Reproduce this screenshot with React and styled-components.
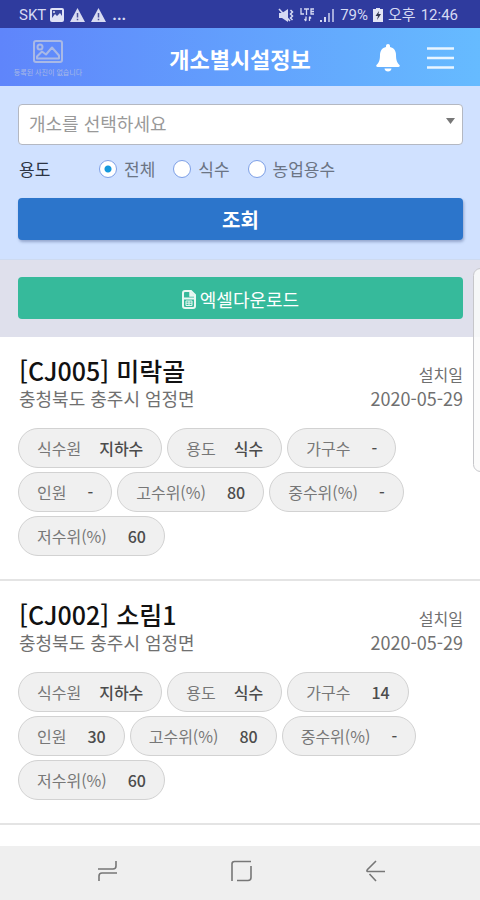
import React, { useState } from "react";
import styled, { createGlobalStyle } from "styled-components";

const GlobalStyle = createGlobalStyle`
  * {
    box-sizing: border-box;
  }
  body {
    margin: 0;
    background-color: #ffffff;
    color: #111111;
    font-family: "Noto Sans CJK KR", "Noto Sans", sans-serif;
  }
  button, select, input {
    font-family: inherit;
  }
`;

const Page = styled.div`
  display: flex;
  flex-direction: column;
  min-height: 100vh;
`;

const StatusBar = styled.div`
  display: flex;
  align-items: center;
  justify-content: space-between;
  height: 28px;
  padding: 2px 22px 0 19px;
  color: #d6daf3;
  background-color: #2f3b9e;
  font-family: Roboto, "Noto Sans CJK KR", sans-serif;
  font-size: 15px;
  line-height: 24px;
`;
const StatusGroup = styled.div`
  display: flex;
  align-items: center;
  gap: ${(props) => props.$gap};
`;
const More = styled.span`
  font-size: 16px;
  font-weight: 700;
`;

const Header = styled.header`
  display: grid;
  grid-template-columns: 1fr auto 1fr;
  align-items: center;
  height: 58px;
  padding: 2px 12px 0;
  background: linear-gradient(90deg, #5f85fb, #66bbff);
`;
const Logo = styled.div`
  display: flex;
  flex-direction: column;
  align-items: center;
  gap: 4px;
  width: 72px;
  color: #a9b9e6;
  font-size: 7px;
  line-height: 10px;
  white-space: nowrap;
`;
const HeaderTitle = styled.h1`
  margin: 0;
  color: #ffffff;
  font-size: 22px;
  font-weight: 700;
  line-height: 32px;
`;
const HeaderActions = styled.div`
  display: flex;
  align-items: center;
  justify-content: flex-end;
  gap: 27px;
  padding-right: 14px;
`;
const IconButton = styled.button`
  display: flex;
  padding: 0;
  border: none;
  background: none;
`;

const SearchForm = styled.form`
  display: flex;
  flex-direction: column;
  padding: 18px 17px 19px 18px;
  background-color: #d0e1ff;
`;
const SelectBox = styled.div`
  position: relative;
`;
const Select = styled.select`
  display: block;
  width: 100%;
  height: 41px;
  padding: 0 10px 4px;
  border: 1px solid #b4b8c2;
  border-radius: 4px;
  appearance: none;
  color: #999999;
  background-color: #ffffff;
  font-size: 18px;
  font-weight: 400;
`;
const SelectArrow = styled.svg`
  position: absolute;
  top: 14px;
  right: 8px;
  pointer-events: none;
`;

const UsageRow = styled.fieldset`
  display: flex;
  align-items: center;
  margin: 0;
  padding: 10px 0 15px 1px;
  border: none;
  font-size: 17px;
  line-height: 28px;
`;
const UsageTitle = styled.span`
  width: 80px;
  color: #2c3444;
`;
const RadioGroup = styled.div`
  display: flex;
  gap: 18px;
`;
const RadioLabel = styled.label`
  display: flex;
  align-items: center;
  gap: 7px;
  color: #6b7484;
`;
const Radio = styled.input`
  width: 18px;
  height: 18px;
  margin: 0;
  border: 1px solid #7d9fe6;
  border-radius: 50%;
  appearance: none;
  background-color: #ffffff;

  &:checked {
    background-image: radial-gradient(circle, #1599dd 3px, #ffffff 4px);
  }
`;

const WideButton = styled.button`
  display: flex;
  align-items: center;
  justify-content: center;
  gap: 4px;
  width: 100%;
  height: 42px;
  padding: 2px 0 0;
  border: none;
  border-radius: 4px;
  color: #ffffff;
  background-color: ${(props) => props.$bgcol};
  box-shadow: ${(props) => props.$shadow || "none"};
  font-size: ${(props) => props.$size};
  font-weight: ${(props) => props.$weight};
  line-height: 28px;
`;

const DownloadBar = styled.div`
  padding: 17px 17px 18px 18px;
  border-top: 1px solid #cddaf0;
  background-color: #dfe0ec;
`;

const FacilityList = styled.ul`
  flex: 1;
  margin: 0;
  padding: 0;
  list-style: none;
`;
const FacilityItem = styled.li`
  padding: 17px 17px 23px 18px;
  border-bottom: 2px solid #e4e4e4;
`;
const FacilityHead = styled.div`
  display: flex;
  align-items: flex-end;
  justify-content: space-between;
  padding: 0 0 18px 1px;
`;
const FacilityName = styled.h2`
  margin: 0;
  color: #111111;
  font-size: 25px;
  font-weight: 500;
  line-height: 32px;
`;
const HeadText = styled.p`
  margin: 0;
  color: #707070;
  font-size: ${(props) => props.$size};
  font-weight: 400;
  line-height: 24px;
  text-align: ${(props) => props.$align || "left"};
`;

const PillList = styled.dl`
  display: flex;
  flex-wrap: wrap;
  gap: 4px 5px;
  margin: 0;
`;
const Pill = styled.div`
  display: flex;
  align-items: center;
  gap: 18px;
  height: 40px;
  padding: 0 18px;
  border: 1px solid #d2d2d2;
  border-radius: 20px;
  background-color: #f0f0f0;
  font-size: 16px;
  line-height: 24px;
`;
const PillName = styled.dt`
  color: #777777;
`;
const PillValue = styled.dd`
  margin: 0;
  padding-left: ${(props) => (props.$numeric ? "3px" : "0")};
  color: #4c4c4c;
  font-weight: 500;
`;

const NavBar = styled.nav`
  position: sticky;
  bottom: 0;
  display: flex;
  align-items: center;
  justify-content: space-around;
  height: 54px;
  padding: 0 37px 4px 40px;
  background-color: #efefef;
`;

const EdgeHandle = styled.div`
  position: fixed;
  top: 268px;
  right: -8px;
  width: 15px;
  height: 204px;
  border: 1px solid #c6c6ca;
  border-radius: 8px;
  background-color: rgba(250, 250, 250, 0.85);
`;

const PictureIcon = () => (
  <svg width="14" height="14" viewBox="0 0 14 14">
    <rect width="14" height="14" rx="2" fill="#dfe2f6" />
    <rect x="2" y="2" width="10" height="8" fill="#39449b" />
    <path d="M2 10l3-4 2 2 3-3 2 3v3H2z" fill="#dfe2f6" />
    <circle cx="4" cy="4" r="1" fill="#dfe2f6" />
  </svg>
);

const WarningIcon = () => (
  <svg width="15" height="14" viewBox="0 0 15 14">
    <path d="M7.5 0L15 14H0z" fill="#d9dcf2" />
    <path d="M7.5 5v4.5M7.5 10.7v1.5" stroke="#4c5299" strokeWidth="1.5" />
  </svg>
);

const MuteIcon = () => (
  <svg width="17" height="15" viewBox="0 0 17 15" fill="none" stroke="#d6daf3">
    <path d="M1 5h3l6-4v13L4 10H1z" fill="#d6daf3" stroke="none" />
    <path d="M1 1l11 12" strokeWidth="1.6" />
    <path d="M12.5 2l2 2-2 2 2 2-2 2 2 2" strokeWidth="1.5" />
  </svg>
);

const LteIcon = () => (
  <svg width="15" height="14" viewBox="0 0 15 14" fill="none" stroke="#d6daf3" strokeWidth="1.3">
    <path d="M1 0v6h3M4 1h5M6.5 1v6M14 1h-3v5h3M11 3.5h3" />
    <path d="M6 8.5v4M4.5 11L6 13M9.5 13V9M11 10.5L9.5 8.5" />
  </svg>
);

const SignalIcon = () => (
  <svg width="15" height="13" viewBox="0 0 15 13" fill="#d6daf3">
    <rect x="0" y="11" width="2" height="2" />
    <rect x="4" y="8" width="2" height="5" />
    <rect x="8" y="4" width="2" height="9" opacity="0.7" />
    <rect x="12" y="0" width="2" height="13" opacity="0.7" />
  </svg>
);

const BatteryIcon = () => (
  <svg width="10" height="14" viewBox="0 0 10 14">
    <path d="M3 0h4v1h3v13H0V1h3z" fill="#e3e5f5" />
    <path d="M6 3L2.5 8H5l-1 4 4-6H5.5z" fill="#31364f" />
  </svg>
);

const LogoIcon = () => (
  <svg width="30" height="23" viewBox="0 0 30 23" fill="none" stroke="#a9b9e6" strokeWidth="2">
    <rect x="1" y="1" width="28" height="21" rx="2" />
    <circle cx="7" cy="7" r="2.5" />
    <path d="M4 18.5h22v-3l-7-8-6 7-4-3-5 5z" strokeLinejoin="round" />
  </svg>
);

const BellIcon = () => (
  <svg width="24" height="28" viewBox="0 0 24 28" fill="#ffffff">
    <path d="M12 0c1.2 0 2 .9 2 2v1c4 .9 6 4 6 8 0 6 1.5 8 3.5 10 .6.8.2 2-1 2h-21c-1.200 0-1.600-1.200-1-2C2.500 19 4 17 4 11c0-4 2-7.100 6-8V2c0-1.100.8-2 2-2z" />
    <path d="M8.5 24.5h7c-.2 1.8-1.6 3-3.5 3s-3.300-1.200-3.500-3z" />
  </svg>
);

const MenuIcon = () => (
  <svg width="27" height="22" viewBox="0 0 27 22" stroke="#e9f5ff" strokeWidth="2.6">
    <path d="M0 1.5h27M0 11h27M0 20.5h27" />
  </svg>
);

const FileIcon = () => (
  <svg width="14" height="19" viewBox="0 0 14 19" fill="none" stroke="#e8f8f2">
    <path d="M1 3a2 2 0 0 1 2-2h6l4 4v11a2 2 0 0 1-2 2H3a2 2 0 0 1-2-2z" strokeWidth="2" />
    <path d="M8 1v5h5" fill="#e8f8f2" strokeWidth="1.5" />
    <path d="M2 8.5h10" strokeWidth="2" />
    <path d="M4 11h6v4.5H4zM4 13.2h6M7 11v4.5" strokeWidth="1" />
  </svg>
);

const RecentIcon = () => (
  <svg width="21" height="22" viewBox="0 0 21 22" fill="none" stroke="#777777" strokeWidth="1.6">
    <path d="M1 9h15q3 0 3-3V1M20 13H5q-3 0-3 3v5" />
  </svg>
);

const HomeIcon = () => (
  <svg width="21" height="22" viewBox="0 0 21 22" fill="none" stroke="#777777" strokeWidth="1.6">
    <path d="M1 21V4q0-2.500 2.500-2.500H20M20 6v11.500q0 3-3 3H6" />
  </svg>
);

const BackIcon = () => (
  <svg width="20" height="22" viewBox="0 0 20 22" fill="none" stroke="#777777" strokeWidth="1.6">
    <path d="M10 1L1.500 9.500q-1.200 1.500 0 2H19M3.500 14l6.500 7" />
  </svg>
);

const usages = ["전체", "식수", "농업용수"];

const facilities = [
  {
    code: "CJ005",
    name: "미락골",
    address: "충청북도 충주시 엄정면",
    date: "2020-05-29",
    details: [
      ["식수원", "지하수"],
      ["용도", "식수"],
      ["가구수", "-"],
      ["인원", "-"],
      ["고수위(%)", "80"],
      ["중수위(%)", "-"],
      ["저수위(%)", "60"],
    ],
  },
  {
    code: "CJ002",
    name: "소림1",
    address: "충청북도 충주시 엄정면",
    date: "2020-05-29",
    details: [
      ["식수원", "지하수"],
      ["용도", "식수"],
      ["가구수", "14"],
      ["인원", "30"],
      ["고수위(%)", "80"],
      ["중수위(%)", "-"],
      ["저수위(%)", "60"],
    ],
  },
];

const Facility = ({ facility }) => {
  return (
    <FacilityItem>
      <FacilityHead>
        <div>
          <FacilityName>
            [{facility.code}] {facility.name}
          </FacilityName>
          <HeadText $size="18px">{facility.address}</HeadText>
        </div>
        <div>
          <HeadText $size="16px" $align="right">
            설치일
          </HeadText>
          <HeadText $size="18px" $align="right">
            {facility.date}
          </HeadText>
        </div>
      </FacilityHead>
      <PillList>
        {facility.details.map(([name, value]) => (
          <Pill key={name}>
            <PillName>{name}</PillName>
            <PillValue $numeric={/^[\d-]+$/.test(value)}>{value}</PillValue>
          </Pill>
        ))}
      </PillList>
    </FacilityItem>
  );
};

const App = () => {
  const [usage, setUsage] = useState("전체");

  return (
    <Page lang="ko">
      <GlobalStyle />
      <StatusBar>
        <StatusGroup $gap="6px">
          <StatusGroup $gap="4px">
            <span>SKT</span>
            <PictureIcon />
          </StatusGroup>
          <WarningIcon />
          <WarningIcon />
          <More>...</More>
        </StatusGroup>
        <StatusGroup $gap="5px">
          <MuteIcon />
          <LteIcon />
          <SignalIcon />
          <span>79%</span>
          <BatteryIcon />
          <StatusGroup $gap="5px">
            <span>오후</span>
            <span>12:46</span>
          </StatusGroup>
        </StatusGroup>
      </StatusBar>

      <Header>
        <Logo>
          <LogoIcon />
          <span>등록된 사진이 없습니다</span>
        </Logo>
        <HeaderTitle>개소별시설정보</HeaderTitle>
        <HeaderActions>
          <IconButton type="button" aria-label="알림">
            <BellIcon />
          </IconButton>
          <IconButton type="button" aria-label="메뉴">
            <MenuIcon />
          </IconButton>
        </HeaderActions>
      </Header>

      <SearchForm onSubmit={(e) => e.preventDefault()}>
        <SelectBox>
          <Select aria-label="개소" defaultValue="">
            <option value="">개소를 선택하세요</option>
            {facilities.map((facility) => (
              <option key={facility.code} value={facility.code}>
                {facility.name}
              </option>
            ))}
          </Select>
          <SelectArrow width="9" height="6" viewBox="0 0 9 6">
            <path d="M0 0h9L4.5 6z" fill="#777777" />
          </SelectArrow>
        </SelectBox>
        <UsageRow aria-labelledby="usage-title">
          <UsageTitle id="usage-title">용도</UsageTitle>
          <RadioGroup>
            {usages.map((item) => (
              <RadioLabel key={item}>
                <Radio
                  type="radio"
                  name="usage"
                  value={item}
                  checked={usage === item}
                  onChange={() => setUsage(item)}
                />
                {item}
              </RadioLabel>
            ))}
          </RadioGroup>
        </UsageRow>
        <WideButton
          type="submit"
          $bgcol="#2c75cb"
          $size="20px"
          $weight="700"
          $shadow="1px 2px 3px rgba(60, 80, 130, 0.4)"
        >
          조회
        </WideButton>
      </SearchForm>

      <DownloadBar>
        <WideButton type="button" $bgcol="#36ba9b" $size="18px" $weight="400">
          <FileIcon />
          엑셀다운로드
        </WideButton>
      </DownloadBar>

      <FacilityList>
        {facilities.map((facility) => (
          <Facility key={facility.code} facility={facility} />
        ))}
      </FacilityList>

      <NavBar>
        <IconButton type="button" aria-label="최근 앱">
          <RecentIcon />
        </IconButton>
        <IconButton type="button" aria-label="홈">
          <HomeIcon />
        </IconButton>
        <IconButton type="button" aria-label="뒤로">
          <BackIcon />
        </IconButton>
      </NavBar>
      <EdgeHandle />
    </Page>
  );
};

export default App;
